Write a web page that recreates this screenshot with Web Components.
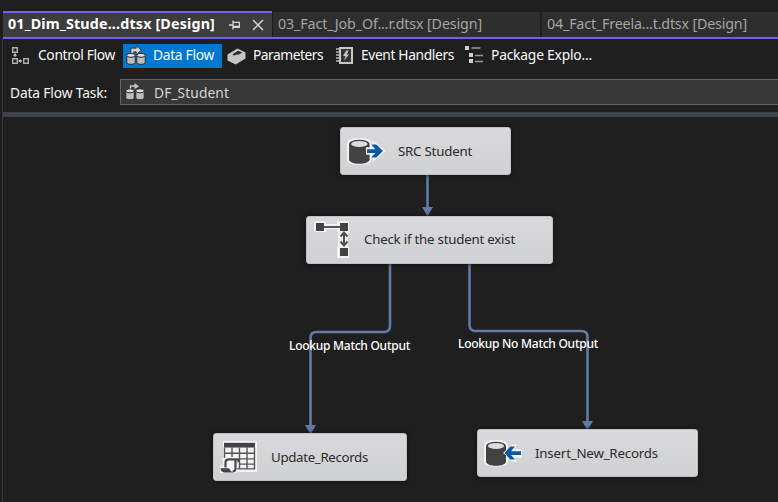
<!DOCTYPE html>
<html lang="en"><head><meta charset="utf-8"><title>Data Flow Designer</title>
<style>
html,body{margin:0;width:778px;height:502px;overflow:hidden;background:#1f1f1f}
body{font-family:"Noto Sans","Open Sans",sans-serif}
</style></head><body>
<designer-app></designer-app>
<script>
const define=(name,html,init)=>customElements.define(name,class extends HTMLElement{
  connectedCallback(){
    if(this.shadowRoot)return;
    const t=document.createElement('template');
    t.innerHTML=html;
    this.attachShadow({mode:'open'}).append(t.content.cloneNode(true));
    if(init)init(this,this.shadowRoot);
  }
});

/* Text whose letter spacing is adjusted to fill a given width. */
define('fit-text',`<style>:host{display:block;white-space:pre;line-height:20px}span{display:inline-block}</style><span></span>`,(h,r)=>{
  const s=r.querySelector('span'),w=+h.getAttribute('w');
  s.textContent=h.getAttribute('text');
  h.style.width=w+'px';
  s.style.letterSpacing=(w-s.getBoundingClientRect().width)/s.textContent.length+'px';
});

const cylinders=`<g stroke="#2a2a2a" stroke-width="1"><path d="M.8 10.500v7c0 2.400 8.400 2.400 8.400 0v-7z" fill="#bdbdbd"/><ellipse cx="5" cy="10.300" rx="4.200" ry="2" fill="#dedede"/><path d="M10.800 10.500v7c0 2.400 8.400 2.400 8.400 0v-7z" fill="#bdbdbd"/><ellipse cx="15" cy="10.300" rx="4.200" ry="2" fill="#dedede"/></g>`;
const drum=`<path d="M3 10v16c0 6 20 6 20 0V10z" fill="#424242"/><ellipse cx="13" cy="9.500" rx="10" ry="4.500" fill="#424242"/><ellipse cx="13" cy="9.500" rx="8" ry="3.200" fill="#dcdcdc"/>`;
const drumHalo=`<path d="M3 9c0-5 20-5 20 0v17c0 5-20 5-20 0z" fill="#f2f2f2" stroke="#f2f2f2" stroke-width="4" stroke-linejoin="round"/>`;
/* name: [width, height, markup, viewBox] */
const icons={
control:[20,20,`<g fill="none" stroke="#b0b0b0" stroke-width="1.400"><path d="M1.700 1.700h4.600v4.600H1.700zM1.700 12.700h4.600v4.600H1.700zM12.700 12.700h4.600v4.600h-4.600z"/><path d="M4 11V8.500M7.500 15H11"/></g><path d="M4 7l2 2.700H2zM7.300 15l2.700-2v4z" fill="#c4c4c4"/>`],
data:[20,20,`${cylinders}<path d="M4.800 3.200h5.400V.8l5.200 4.400-5.200 4.300V6.800H7.800v1.700h-3z" fill="#d4d4d4" stroke="#333" stroke-width=".9"/>`],
task:[20,20,`<g transform="translate(0 -1.500)">${cylinders}</g><path d="M5.500 6.500V4h5" fill="none" stroke="#c6c6c6" stroke-width="1.400"/><path d="M9.500 1l4.500 3.200-4.500 3z" fill="#c6c6c6"/>`],
params:[20,20,`<path d="M.5 8.500L10.500 2.500 18.500 6.500v6L8.700 18.500.5 14.500z" fill="#c6c6c6"/><path d="M5.500 8.200l5.500-3.400 4.200 1.800-3.200 2-3.200.2-1.800 1z" fill="#2b2b2b"/>`],
event:[18,20,`<path d="M4 2h12v15H4z" fill="#333" stroke="#c8c8c8" stroke-width="2"/><path d="M0 3h3M0 6h3M0 9h3M0 12h3M0 15h3" stroke="#b8b8b8" stroke-width="1.300"/><path d="M10.300 4.500L7 10h2.500L8 14.500l5-6h-2.300L12.800 4.500z" fill="#c8c8c8"/>`],
package:[20,20,`<g fill="#d0d0d0"><path d="M0 1h4v4H0zM4 8h4v4H4zM4 14h4v4H4z"/></g><path d="M6.500 3h9M10 10.500h8M10 16.500h8" stroke="#999" stroke-width="1.700"/>`],
pin:[12,12,`<path d="M0 6h4M4 1.500v9M4 3.300h6.300v5H4M4 7.300h6" fill="none" stroke="#d8d8d8" stroke-width="1.300"/>`],
close:[12,12,`<path d="M1 1l10 10M11 1L1 11" stroke="#d6d6d6" stroke-width="1.500"/>`],
source:[39,30,`${drumHalo}<path d="M19 14h8V7.500L37 17l-10 9.500V20h-8z" fill="#f3f3f3" stroke="#f3f3f3" stroke-width="2"/>${drum}<path d="M19.500 13H28v8h-8.500z" fill="#f3f3f3"/><path d="M20.500 15h8l-3.700-5h4.700l6.500 7-6.500 7h-4.700l3.700-5h-8z" fill="#0858a5"/>`,'0 1 38 32'],
dest:[40,30,`${drumHalo}<path d="M20 17l9-9h5l-3 5h8v9h-8l3 4h-5z" fill="#f3f3f3"/>${drum}<path d="M20 17l9-9v4l-1 2h10v7H28l2 4z" fill="#f3f3f3"/><path d="M38 15H28l4-5h-4.700L21.500 17l5.800 7H32l-4-5h10z" fill="#0858a5"/>`,'0 1 40 32'],
lookup:[42,40,`<path d="M2 1h12v3h11V1h12v12h-1v14h1v11H25V27h1V12h-1V9H14v3H2z" fill="#f2f2f2"/><g fill="#424242"><path d="M4 3h8v8H4zM28 3h8v8h-8zM28 28h8v8h-8z"/></g><path d="M12 7h16" stroke="#555" stroke-width="2"/><path d="M32 13v12M28.500 16.500L32 12.500l3.500 4M28.500 21.500L32 25.500l3.500-4" fill="none" stroke="#505050" stroke-width="2"/>`],
table:[38,34,`<path d="M3 1h34v33H16l-3 1H0v-8h3z" fill="#f4f4f4"/><path d="M4 3h31v5H4z" fill="#424242"/><path d="M4.500 8v11M12 8v10M19.500 8v23M27 8v23M34.500 8v23M4 14h31M4 20h31M19 25.500h16M17 30.500h18" fill="none" stroke="#555" stroke-width="1.400"/><path d="M2 19h17v4h-2v12H1v-7h3z" fill="#f4f4f4"/><path d="M5.500 29v-5.500c0-2 1.500-3 3.500-3h9.500v3M15.500 21v9.500c0 2-1 2.800-3 2.800" fill="none" stroke="#484848" stroke-width="2.200"/><path d="M.5 30h8.500q1 3 4 4.300H4q-3.500-.6-3.500-4.300z" fill="#424242"/>`,'0 0 38 36']
};
define('ui-icon',`<style>:host{display:block;flex:none}svg{display:block}</style><svg preserveAspectRatio="none"></svg>`,(h,r)=>{
  const [w,ht,p,vb]=icons[h.getAttribute('name')],s=r.querySelector('svg');
  s.setAttribute('width',w);s.setAttribute('height',ht);
  s.setAttribute('viewBox',vb||`0 0 ${w} ${ht}`);s.innerHTML=p;
});

define('doc-tab',`<style>
:host{display:flex;box-sizing:border-box;height:25px;padding:2px 0 0 5px;background:#2e2e2e;color:#a5a5a5;font-size:14.300px;margin-top:1px;flex:none}
:host([active]){border-top:2px solid #7160e8;background:#3d3d3d;color:#fff;font-weight:700;margin:0;height:26px;padding:1px 0 0 5px}
ui-icon{display:none}:host([active]) ui-icon{display:block}
.pin{margin:5px 0 0 14px}.close{margin:5px 0 0 11px}
</style><slot></slot><ui-icon class="pin" name="pin"></ui-icon><ui-icon class="close" name="close"></ui-icon>`);

define('view-bar',`<style>
:host{display:grid;grid-template-columns:112px 101px 108px 130px 1fr;padding:5px 0 0 8px;height:30px;box-sizing:border-box}
div{display:flex;height:24px;color:#fafafa;font-size:13.800px;align-items:flex-start}
div ui-icon{margin:2px 0 0 3px}
div fit-text{margin-top:1px}
.on{background:#0078d0;width:99px}
</style>
<div><ui-icon name="control" style="margin-left:0"></ui-icon><fit-text style="margin-left:7px" w="77" text="Control Flow"></fit-text></div>
<div class="on"><ui-icon name="data" style="margin-top:1px"></ui-icon><fit-text style="margin-left:7px" w="61" text="Data Flow"></fit-text></div>
<div><ui-icon name="params"></ui-icon><fit-text style="margin-left:6px" w="70" text="Parameters"></fit-text></div>
<div><ui-icon name="event" style="margin-left:4px"></ui-icon><fit-text style="margin-left:7px" w="93" text="Event Handlers"></fit-text></div>
<div><ui-icon name="package" style="margin:1px 0 0 3px"></ui-icon><fit-text style="margin-left:6px" w="101" text="Package Explo..."></fit-text></div>`);

define('task-picker',`<style>
:host{display:flex;height:43px;box-sizing:border-box;padding:10px 0 0 7px;color:#f4f4f4;font-size:13.800px}
.label{margin-top:4px}
.box{display:flex;flex:1;height:26px;box-sizing:border-box;border:1px solid #666;border-right:0;background:#383838;margin-left:13px;color:#d6d6d6;padding:3px 0 0 4px}
.box ui-icon{margin-top:-1px}
</style><fit-text class="label" w="97" text="Data Flow Task:"></fit-text><div class="box"><ui-icon name="task"></ui-icon><fit-text style="margin-left:9px" w="75" text="DF_Student"></fit-text></div>`);

define('flow-node',`<style>
:host{position:absolute;display:flex;align-items:center;box-sizing:border-box;height:48px;border:1px solid #c2c2c5;border-radius:3px;background:linear-gradient(#d9d9dc,#d0d1d2);color:#2a2a2a;font-size:13.300px;box-shadow:0 0 4px #111}
::slotted(fit-text){margin-top:-1px}
</style><slot></slot>`,(h)=>{
  const [x,y,w]=h.getAttribute('box').split(' ');
  h.style.cssText=`left:${x}px;top:${y}px;width:${w}px`;
});

define('flow-canvas',`<style>
:host{display:block;position:relative;flex:1;overflow:hidden}
svg{position:absolute;left:0;top:0}
.cap{position:absolute;color:#fff;font-size:12px;font-weight:500}
</style>
<svg width="775" height="385"><g fill="none" stroke="#617ba5" stroke-width="2.600">
<path d="M424.500 58v34M387 146.500V209q0 6-6 6H313.500q-6 0-6 6V308M466.500 146.500V208q0 6 6 6H578.500q6 0 6 6V304"/></g>
<path fill="#617ba5" d="M419 90h11L424.500 99.500zM302 308h11l-5.500 9.500zM579 304h11l-5.500 9.500z"/></svg>
<flow-node box="337 10 171"><ui-icon name="source" style="margin-left:5px"></ui-icon><fit-text style="margin-left:13px" w="74" text="SRC Student"></fit-text></flow-node>
<flow-node box="303 99 247"><ui-icon name="lookup" style="margin-left:5px"></ui-icon><fit-text style="margin:-3px 0 0 10px" w="151" text="Check if the student exist"></fit-text></flow-node>
<flow-node box="210 316 194"><ui-icon name="table" style="margin-left:6px"></ui-icon><fit-text style="margin-left:13px" w="97" text="Update_Records"></fit-text></flow-node>
<flow-node box="474 312 221"><ui-icon name="dest" style="margin-left:5px"></ui-icon><fit-text style="margin-left:12px" w="123" text="Insert_New_Records"></fit-text></flow-node>
<fit-text class="cap" style="left:286px;top:219px" w="121" text="Lookup Match Output"></fit-text>
<fit-text class="cap" style="left:455px;top:217px" w="140" text="Lookup No Match Output"></fit-text>`);

define('designer-app',`<style>
:host{display:flex;flex-direction:column;width:778px;height:502px;box-sizing:border-box;padding:11px 0 0 2px;background:#1f1f1f}
.tabs{display:flex;height:26px;padding-left:1px;flex:none}
.line{height:2px;background:#7160e8;margin-left:1px;flex:none}
.body{display:flex;flex-direction:column;flex:1;min-height:0;border-left:1px solid #3a3a3a}
.split{height:5px;background:#404348;flex:none}
</style>
<div class="tabs"><doc-tab active style="width:269px"><fit-text w="207" text="01_Dim_Stude...dtsx [Design]"></fit-text></doc-tab>
<doc-tab style="width:267px;margin-left:1px"><fit-text w="204" text="03_Fact_Job_Of...r.dtsx [Design]"></fit-text></doc-tab>
<doc-tab style="width:236px;margin-left:2px"><fit-text w="200" text="04_Fact_Freela...t.dtsx [Design]"></fit-text></doc-tab></div>
<div class="line"></div>
<div class="body"><view-bar></view-bar><task-picker></task-picker><div class="split"></div><flow-canvas></flow-canvas></div>`);
</script></body></html>
